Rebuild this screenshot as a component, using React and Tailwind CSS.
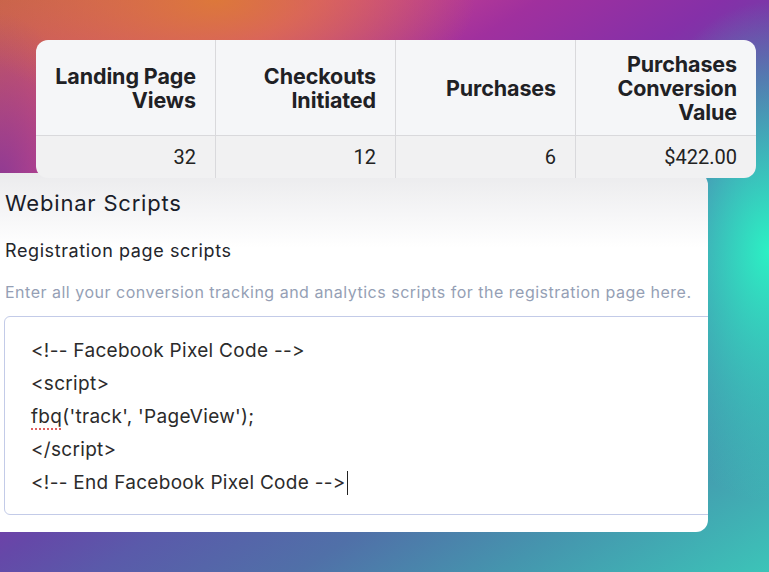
export default function App() {
  const headers = [
    ["Landing Page", "Views"],
    ["Checkouts", "Initiated"],
    ["Purchases"],
    ["Purchases", "Conversion", "Value"],
  ];
  const values = ["32", "12", "6", "$422.00"];
  return (
    <div className="w-[769px] h-[572px] overflow-hidden pt-[40px] bg-[radial-gradient(ellipse_260px_120px_at_28%_0%,rgba(222,124,52,0.9),rgba(222,124,52,0)),radial-gradient(ellipse_90px_170px_at_0%_32%,rgba(130,55,150,0.85),rgba(130,55,150,0)),radial-gradient(ellipse_150px_250px_at_100%_44%,rgba(44,240,196,1),rgba(44,240,196,0)),linear-gradient(148deg,#c6604f_0%,#d4488a_19%,#a0309e_32%,#8530a8_43%,#6548a8_53%,#5a5aaa_60%,#5070a8_72%,#4595ae_84%,#3cc4b8_100%)]">
      <div className="relative z-10 ml-[36px] w-[720px] rounded-[12px] overflow-hidden font-['Inter',sans-serif] text-[#1f2125]">
        <div className="grid grid-cols-4 bg-[#f5f6f8] h-[96px] border-b border-[#d9d9dc]">
          {headers.map((h, i) => (
            <div
              key={i}
              className={`flex flex-col justify-center items-end pr-[19px] text-[21.5px] leading-[24px] font-bold tracking-[-0.1px] ${i < 3 ? "border-r border-[#d9d9dc]" : ""}`}
            >
              {h.map((l) => (
                <span key={l}>{l}</span>
              ))}
            </div>
          ))}
        </div>
        <div className="grid grid-cols-4 bg-[#f1f1f2] h-[42px]">
          {values.map((v, i) => (
            <div
              key={i}
              className={`flex items-center justify-end pr-[19px] font-['Roboto',sans-serif] text-[20px] text-[#222] ${i < 3 ? "border-r border-[#d9d9dc]" : ""}`}
            >
              {v}
            </div>
          ))}
        </div>
      </div>
      <div className="mt-[-5px] w-[708px] h-[359px] rounded-r-[12px] overflow-hidden bg-[linear-gradient(to_bottom,#ebebed_0px,#f7f7f8_45px,#ffffff_75px)] pl-[4px] font-['Inter',sans-serif] [font-feature-settings:'calt'_0,'liga'_0]">
        <div className="pl-[1px] pt-[15px] text-[22px] leading-[30px] tracking-[0.8px] text-[#1a1d29]">Webinar Scripts</div>
        <div className="pl-[1px] mt-[21px] text-[18px] leading-[24px] tracking-[0.6px] text-[#23252b]">Registration page scripts</div>
        <div className="pl-[1px] mt-[18px] text-[16px] leading-[22px] tracking-[0.5px] text-[#959fb5]">
          Enter all your conversion tracking and analytics scripts for the registration page here.
        </div>
        <div className="mt-[13px] w-[740px] h-[199px] border border-[#c3cbe8] rounded-[6px] bg-white pl-[26px] pt-[17px] text-[19px] leading-[33px] tracking-[0.3px] text-[#2b2b2b]">
          <div>{"<!-- Facebook Pixel Code -->"}</div>
          <div>{"<script>"}</div>
          <div>
            <span className="underline decoration-dotted decoration-[#e06060] decoration-2 underline-offset-[5px]">fbq</span>
            {"('track', 'PageView');"}
          </div>
          <div>{"</script>"}</div>
          <div className="flex items-center">
            <span>{"<!-- End Facebook Pixel Code -->"}</span>
            <span className="inline-block w-[1.5px] h-[24px] bg-[#222] ml-[1px]"></span>
          </div>
        </div>
      </div>
    </div>
  );
}
